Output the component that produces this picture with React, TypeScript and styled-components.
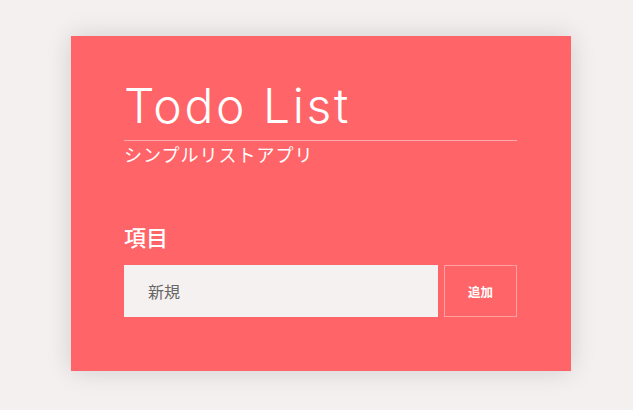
import styled, { createGlobalStyle } from "styled-components";

const GlobalStyle = createGlobalStyle`
  html, body {
    margin: 0;
    padding: 0;
    background: #f5f0f0;
    font-family: "Noto Sans CJK JP", "Noto Sans", sans-serif;
  }
`;

const Page = styled.div`
  width: 633px;
  height: 410px;
  padding: 36px 0 0 71px;
  box-sizing: border-box;
`;

const Card = styled.section`
  width: 500px;
  height: 335px;
  box-sizing: border-box;
  padding: 38px 54px 0 53px;
  background: #ff6468;
  box-shadow: 0 0 24px rgba(0, 0, 0, 0.14);
  color: #fff;
`;

const Title = styled.h1`
  margin: 0;
  font-family: Inter, "Noto Sans CJK JP", sans-serif;
  font-size: 48px;
  font-weight: 350;
  line-height: 64px;
  letter-spacing: 2.6px;
  border-bottom: 1px solid rgba(255, 255, 255, 0.45);
  padding-bottom: 2px;
`;

const Subtitle = styled.p`
  margin: 0;
  font-size: 18px;
  line-height: 26px;
  letter-spacing: 1px;
  font-weight: 400;
`;

const Label = styled.h2`
  margin: 54px 0 0;
  font-size: 22px;
  font-weight: 500;
  line-height: 30px;
`;

const Row = styled.form`
  display: flex;
  gap: 6px;
  margin-top: 14px;
`;

const Input = styled.input`
  flex: 1;
  height: 52px;
  box-sizing: border-box;
  border: none;
  outline: none;
  padding: 0 24px;
  background: #f6f1f1;
  font-family: inherit;
  font-size: 16px;
  color: #666;
  &::placeholder {
    color: #666;
  }
`;

const AddButton = styled.button`
  width: 73px;
  height: 52px;
  box-sizing: border-box;
  background: transparent;
  border: 1px solid rgba(255, 255, 255, 0.4);
  color: #fff;
  font-family: inherit;
  font-size: 12.5px;
  font-weight: 700;
  cursor: pointer;
`;

export default function App() {
  return (
    <Page>
      <GlobalStyle />
      <Card>
        <Title>Todo List</Title>
        <Subtitle>シンプルリストアプリ</Subtitle>
        <Label>項目</Label>
        <Row onSubmit={(e) => e.preventDefault()}>
          <Input placeholder="新規" />
          <AddButton type="submit">追加</AddButton>
        </Row>
      </Card>
    </Page>
  );
}
